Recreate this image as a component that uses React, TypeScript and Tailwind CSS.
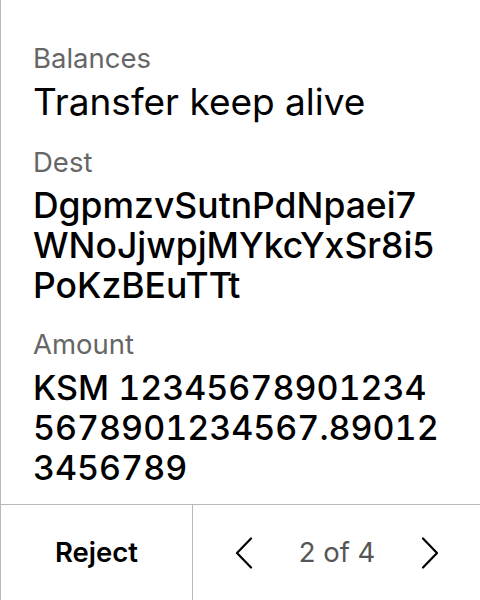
const fields = [
  { label: "Dest", lines: ["DgpmzvSutnPdNpaei7", "WNoJjwpjMYkcYxSr8i5", "PoKzBEuTTt"], nums: false },
  { label: "Amount", lines: ["KSM 12345678901234", "5678901234567.89012", "3456789"], nums: true },
];

function Chevron({ dir }: { dir: "left" | "right" }) {
  return (
    <svg width="18" height="32" viewBox="0 0 18 32" fill="none" stroke="currentColor" strokeWidth="2.2" strokeLinecap="round" strokeLinejoin="round">
      {dir === "left" ? <polyline points="16,1.5 2,16 16,30.5" /> : <polyline points="2,1.5 16,16 2,30.5" />}
    </svg>
  );
}

export default function App() {
  return (
    <div
      className="w-[480px] h-[600px] flex flex-col bg-white border-l border-[#b8b8b8] text-black"
      style={{ fontFamily: "Inter, 'Noto Sans', sans-serif" }}
    >
      <div className="flex-1 pl-[32px] pt-[42px]">
        <div className="text-[27.5px] leading-[32px] text-[#666666]">Balances</div>
        <div className="text-[37px] leading-[44px] mt-[6px]">Transfer keep alive</div>

        {fields.map((f) => (
          <div key={f.label} className="mt-[22px]">
            <div className="text-[27.5px] leading-[32px] text-[#666666]">{f.label}</div>
            <div
              className={
                f.nums
                  ? "mt-[8px] text-[34px] leading-[40px] font-medium whitespace-nowrap tabular-nums"
                  : "mt-[8px] text-[35.5px] leading-[40px] font-medium whitespace-nowrap"
              }
            >
              {f.lines.map((line) => (
                <div key={line}>{line}</div>
              ))}
            </div>
          </div>
        ))}
      </div>

      <div className="h-[96px] flex border-t border-[#b8b8b8]">
        <button className="w-[192px] flex items-center justify-center text-[27.5px] font-semibold border-r border-[#b8b8b8]">
          Reject
        </button>
        <div className="flex-1 flex items-center justify-between pl-[42px] pr-[41px]">
          <Chevron dir="left" />
          <span className="text-[27.5px] text-[#555555]">2 of 4</span>
          <Chevron dir="right" />
        </div>
      </div>
    </div>
  );
}
